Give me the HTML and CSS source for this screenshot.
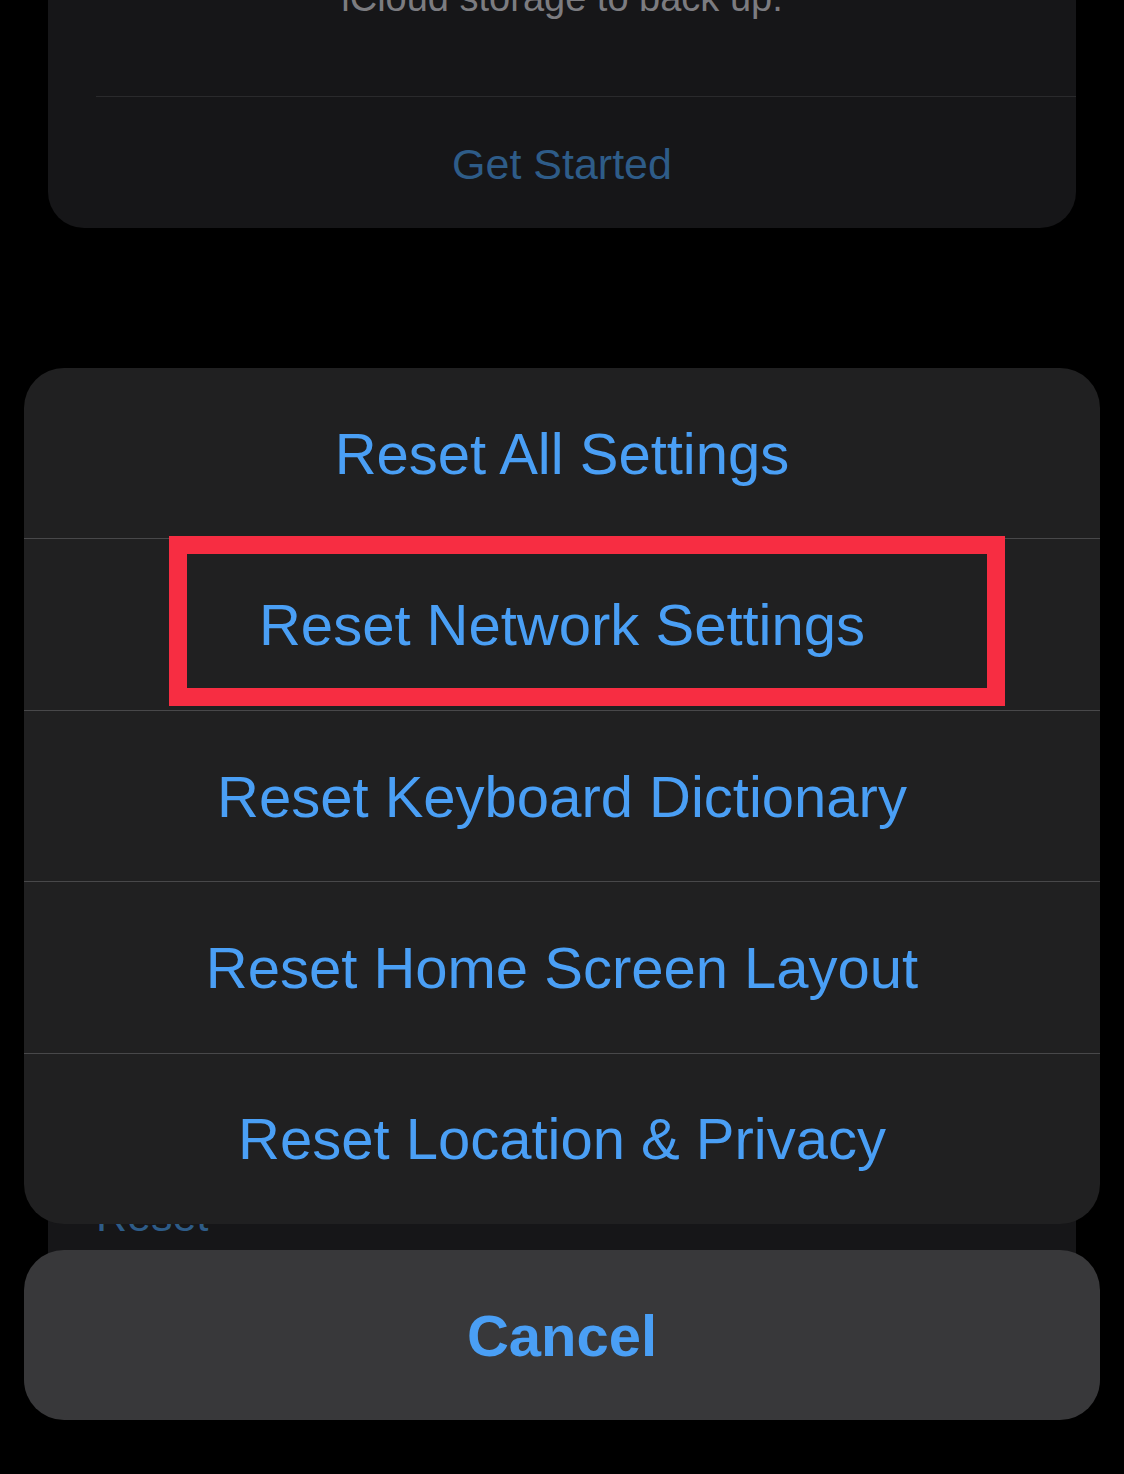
FILE: index.html
```html
<!DOCTYPE html>
<html lang="en">
<head>
  <meta charset="UTF-8">
  <meta name="viewport" content="width=device-width, initial-scale=1.0">
  <title>Reset</title>
  <link rel="stylesheet" href="styles.css">
</head>
<body>

  <div class="settings">
    <section class="group group-backup">
      <p class="note">iCloud storage to back up.</p>
      <div class="group-row link">Get Started</div>
    </section>
    <section class="group group-reset">
      <div class="group-row link left">Reset</div>
    </section>
  </div>

  <div class="sheet-layer">
    <div class="sheet">
      <button class="sheet-row">Reset All Settings</button>
      <button class="sheet-row highlighted">
        <span class="mark"></span>
        Reset Network Settings
      </button>
      <button class="sheet-row">Reset Keyboard Dictionary</button>
      <button class="sheet-row">Reset Home Screen Layout</button>
      <button class="sheet-row">Reset Location &amp; Privacy</button>
    </div>
    <button class="cancel">Cancel</button>
  </div>

</body>
</html>
```

FILE: styles.css
```css
html, body {
  margin: 0;
  height: 100%;
}
body {
  background: #000;
  font-family: 'Liberation Sans', Arial, sans-serif;
  overflow: hidden;
}
.settings {
  padding: 0 48px;
}
.group {
  background: #161618;
  border-radius: 0 0 36px 36px;
}
.group-backup {
  margin-top: -26px;
}
.note {
  margin: 0;
  padding: 0 48px 74px;
  font-size: 38px;
  line-height: 48px;
  color: #7c7c80;
  text-align: center;
}
.group-row {
  height: 132px;
  box-sizing: border-box;
  padding: 4px 48px 0 0;
  display: flex;
  align-items: center;
  justify-content: center;
  margin-left: 48px;
  border-top: 1px solid #2a2a2c;
  font-size: 43px;
}
.link {
  color: #2e5c88;
}
.group-reset {
  margin-top: 920px;
  height: 220px;
  border-radius: 36px;
}
.group-row.left {
  justify-content: flex-start;
  border-top: none;
}

/* action sheet over the page */
.sheet-layer {
  position: fixed;
  left: 0;
  right: 0;
  top: 368px;
  padding: 0 24px;
  display: flex;
  flex-direction: column;
  gap: 26px;
}
.sheet {
  height: 856px;
  background: #202021;
  border-radius: 40px;
  display: flex;
  flex-direction: column;
}
.sheet-row {
  position: relative;
  flex: 1;
  border: none;
  background: none;
  border-top: 1px solid #48484a;
  font-family: inherit;
  font-size: 58px;
  color: #4a9ff5;
  padding: 0;
  cursor: pointer;
}
.sheet-row:first-child {
  border-top: none;
}
.mark {
  position: absolute;
  left: 145px;
  top: -3px;
  width: 836px;
  height: 170px;
  box-sizing: border-box;
  border: 18px solid #f72d42;
}
.cancel {
  height: 170px;
  border: none;
  border-radius: 40px;
  background: #38383a;
  font-family: inherit;
  font-size: 58px;
  font-weight: bold;
  color: #4a9ff5;
  cursor: pointer;
}
```
